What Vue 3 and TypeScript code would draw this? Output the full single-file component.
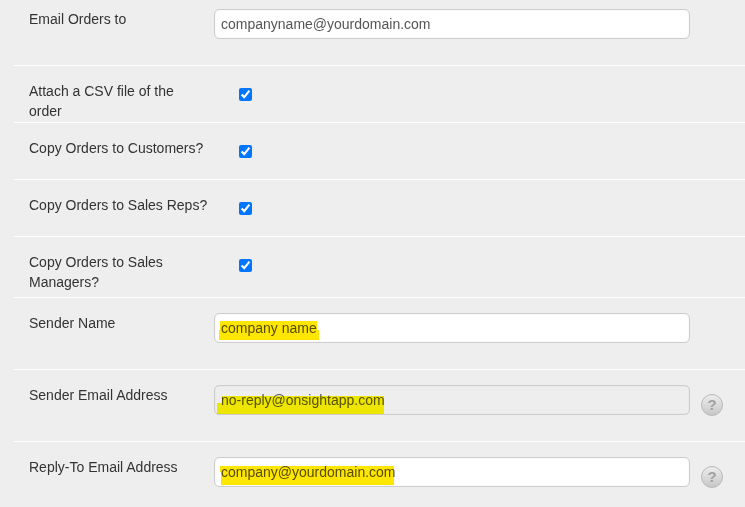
<script setup lang="ts">
interface Mark { left: number; top: number; width: number; height: number }
interface Row {
  label: string
  kind: 'text' | 'check'
  value?: string
  disabled?: boolean
  help?: boolean
  cls: string
  marks?: Mark[]
}
const rows: Row[] = [
  { label: 'Email Orders to', kind: 'text', value: 'companyname@yourdomain.com', cls: 'r-first' },
  { label: 'Attach a CSV file of the order', kind: 'check', cls: 'r-check' },
  { label: 'Copy Orders to Customers?', kind: 'check', cls: 'r-check' },
  { label: 'Copy Orders to Sales Reps?', kind: 'check', cls: 'r-check' },
  { label: 'Copy Orders to Sales Managers?', kind: 'check', cls: 'r-check r-tall' },
  { label: 'Sender Name', kind: 'text', value: 'company name', cls: 'r-text',
    marks: [{ left: 6, top: 8, width: 97, height: 9 }, { left: 5, top: 17, width: 100, height: 10 }] },
  { label: 'Sender Email Address', kind: 'text', value: 'no-reply@onsightapp.com', disabled: true, help: true, cls: 'r-text',
    marks: [{ left: 8, top: 11, width: 162, height: 7 }, { left: 3, top: 18, width: 167, height: 11 }] },
  { label: 'Reply-To Email Address', kind: 'text', value: 'company@yourdomain.com', help: true, cls: 'r-text',
    marks: [{ left: 6, top: 9, width: 174, height: 6 }, { left: 7, top: 15, width: 173, height: 13 }] },
]
</script>

<template>
  <main class="page">
    <div v-for="row in rows" :key="row.label" class="row" :class="row.cls">
      <label class="label">{{ row.label }}</label>
      <div v-if="row.kind === 'text'" class="field">
        <input class="input" type="text" :value="row.value" :disabled="row.disabled" />
        <span
          v-for="(m, i) in row.marks"
          :key="i"
          class="mark"
          :class="{ 'mark-dim': row.disabled }"
          :style="{ left: m.left + 'px', top: m.top + 'px', width: m.width + 'px', height: m.height + 'px' }"
        ></span>
        <span v-if="row.help" class="help">?</span>
      </div>
      <input v-else class="check" type="checkbox" checked />
    </div>
  </main>
</template>

<style>
html, body { margin: 0; background: #eeeeee; overflow: hidden; }
</style>

<style scoped>
.page {
  width: 745px;
  height: 507px;
  box-sizing: border-box;
  padding-left: 14px;
  background: #eeeeee;
  font-family: "Liberation Sans", Arial, sans-serif;
  font-size: 14px;
  line-height: 20px;
  color: #333333;
  overflow: hidden;
}
.row {
  display: flex;
  align-items: flex-start;
  box-sizing: border-box;
  border-bottom: 1px solid #ffffff;
}
.r-first { height: 66px; padding-top: 9px; }
.r-check { height: 57px; padding-top: 15px; }
.r-tall { height: 61px; }
.r-text { height: 72px; padding-top: 15px; }
.label {
  width: 180px;
  margin-left: 15px;
  flex: none;
}
.field {
  position: relative;
  margin-left: 5px;
  width: 476px;
  height: 30px;
}
.input {
  display: block;
  width: 100%;
  height: 30px;
  box-sizing: border-box;
  padding: 0 6px;
  border: 1px solid #cdcdcd;
  border-radius: 5px;
  background: #ffffff;
  color: #555555;
  font: inherit;
  box-shadow: inset 0 0 1px rgba(0, 0, 0, 0.18);
}
.input:disabled {
  background: #eeeeee;
  color: #555555;
  opacity: 1;
}
.mark {
  position: absolute;
  background: #ffe600;
  mix-blend-mode: multiply;
  pointer-events: none;
}
.mark-dim { background: #fff600; }
.help {
  position: absolute;
  left: 487px;
  top: 9px;
  width: 22px;
  height: 22px;
  box-sizing: border-box;
  border: 1px solid #b8b8b8;
  border-radius: 50%;
  background: linear-gradient(#ececec, #c8c8c8);
  color: #a0a0a0;
  font-size: 15px;
  font-weight: 700;
  line-height: 20px;
  text-align: center;
}
.check {
  flex: none;
  width: 13px;
  height: 13px;
  margin: 7px 0 0 30px;
  accent-color: #0075ff;
}
</style>
